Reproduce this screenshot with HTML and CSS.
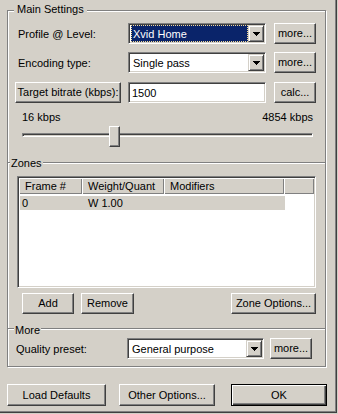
FILE: index.html
```html
<!DOCTYPE html>
<html lang="en">
<head>
    <meta charset="UTF-8">
    <meta name="viewport" content="width=device-width, initial-scale=1.0">
    <title>Xvid Configuration</title>
    <link rel="stylesheet" href="styles.css">
</head>
<body>
    <div class="window">
        <div class="group">
            <div class="legend legend-main">Main Settings</div>
            <div class="main">
                <div class="row row-1">
                    <span class="label">Profile @ Level:</span>
                    <div class="combo focused">
                        <span class="combo-text"><span class="sel">Xvid Home</span></span>
                        <span class="drop"><svg width="7" height="4" viewBox="0 0 7 4"><path d="M0 0h7v1H0zM1 1h5v1H1zM2 2h3v1H2zM3 3h1v1H3z"/></svg></span>
                    </div>
                    <button type="button" class="btn btn-side">more...</button>
                </div>
                <div class="row row-2">
                    <span class="label">Encoding type:</span>
                    <div class="combo">
                        <span class="combo-text">Single pass</span>
                        <span class="drop"><svg width="7" height="4" viewBox="0 0 7 4"><path d="M0 0h7v1H0zM1 1h5v1H1zM2 2h3v1H2zM3 3h1v1H3z"/></svg></span>
                    </div>
                    <button type="button" class="btn btn-side">more...</button>
                </div>
                <div class="row row-3">
                    <button type="button" class="btn btn-target">Target bitrate (kbps):</button>
                    <div class="edit">1500</div>
                    <button type="button" class="btn btn-side">calc...</button>
                </div>
                <div class="scale">
                    <span>16 kbps</span>
                    <span>4854 kbps</span>
                </div>
                <div class="slider">
                    <div class="channel"></div>
                    <div class="thumb" style="left: 87px;"></div>
                </div>
            </div>

            <div class="sep sep-zones"></div>
            <div class="legend legend-zones">Zones</div>
            <div class="zones">
                <div class="listview">
                    <div class="lv-header">
                        <div class="col col-frame">Frame #</div>
                        <div class="col col-weight">Weight/Quant</div>
                        <div class="col col-mod">Modifiers</div>
                        <div class="col col-rest"></div>
                    </div>
                    <div class="lv-row">
                        <span class="cell cell-frame">0</span>
                        <span class="cell cell-weight">W 1.00</span>
                    </div>
                </div>
                <div class="zone-buttons">
                    <button type="button" class="btn btn-add">Add</button>
                    <button type="button" class="btn btn-remove">Remove</button>
                    <button type="button" class="btn btn-zone">Zone Options...</button>
                </div>
            </div>

            <div class="sep sep-more"></div>
            <div class="legend legend-more">More</div>
            <div class="more">
                <div class="row row-q">
                    <span class="label label-q">Quality preset:</span>
                    <div class="combo combo-q">
                        <span class="combo-text">General purpose</span>
                        <span class="drop"><svg width="7" height="4" viewBox="0 0 7 4"><path d="M0 0h7v1H0zM1 1h5v1H1zM2 2h3v1H2zM3 3h1v1H3z"/></svg></span>
                    </div>
                    <button type="button" class="btn btn-side btn-q">more...</button>
                </div>
            </div>
        </div>

        <div class="footer">
            <button type="button" class="btn btn-load">Load Defaults</button>
            <button type="button" class="btn btn-other">Other Options...</button>
            <button type="button" class="btn btn-default btn-ok">OK</button>
        </div>
    </div>
</body>
</html>
```

FILE: styles.css
```css
body {
    margin: 0;
    background-color: #d4d0c8;
    font-family: "Liberation Sans", Arial, sans-serif;
    font-size: 11px;
    color: #000;
}
.window {
    width: 337px;
    height: 413px;
    box-sizing: border-box;
    padding-top: 10px;
    overflow: hidden;
    box-shadow: inset -1px -1px #404040, inset -2px -2px #808080;
}
.group {
    margin-left: 7px;
    width: 319px;
    height: 357px;
    box-sizing: border-box;
    border: 1px solid #808080;
    box-shadow: inset 1px 1px #fff, 1px 1px #fff;
}
.legend {
    width: fit-content;
    line-height: 13px;
    background-color: #d4d0c8;
}
.legend-main {
    margin: -8px 0 0 6px;
    padding: 0 3px;
}
.legend-zones {
    margin: -7px 0 0 2px;
    padding: 0 1px;
}
.legend-more {
    margin: -6px 0 0 6px;
    padding: 0 1px;
}
.sep {
    height: 0;
    border-top: 1px solid #808080;
    border-bottom: 1px solid #fff;
}
.sep-zones {
    margin-top: 15px;
}
.sep-more {
    margin-top: 14px;
}

/* buttons */
.btn {
    font: inherit;
    color: #000;
    padding: 0;
    height: 21px;
    box-sizing: border-box;
    background-color: #d4d0c8;
    border: 1px solid;
    border-color: #fff #404040 #404040 #fff;
    box-shadow: inset -1px -1px #808080;
    line-height: 17px;
    flex: none;
}
.btn-default {
    border: 1px solid #000;
    box-shadow: inset 1px 1px #fff, inset -1px -1px #404040, inset -2px -2px #808080;
}

/* rows */
.main {
    padding: 0 9px 0 10px;
}
.row {
    display: flex;
    align-items: center;
    height: 21px;
}
.row-1 {
    margin-top: 7px;
}
.row-2 {
    margin-top: 8px;
}
.row-3 {
    margin-top: 9px;
}
.label {
    width: 110px;
    flex: none;
}
.btn-side {
    width: 42px;
    margin-left: 8px;
}
.btn-target {
    width: 106px;
    margin: 0 7px 0 -3px;
}

/* combo boxes and edits */
.combo,
.edit {
    width: 138px;
    height: 21px;
    box-sizing: border-box;
    flex: none;
    background-color: #fff;
    border: 1px solid;
    border-color: #808080 #fff #fff #808080;
    box-shadow: inset 1px 1px #404040, inset -1px -1px #d4d0c8;
    padding: 1px;
    display: flex;
    align-items: center;
}
.edit {
    padding-left: 3px;
}
.combo-text {
    flex: 1;
    align-self: stretch;
    display: flex;
    align-items: center;
    padding-left: 3px;
    white-space: nowrap;
}
.focused .combo-text {
    padding: 0 0 0 1px;
}
.sel {
    flex: 1;
    align-self: stretch;
    display: flex;
    align-items: center;
    padding-left: 1px;
    background-color: #0a246a;
    color: #fff;
    border: 1px dotted #f5db95;
}
.drop {
    width: 16px;
    height: 17px;
    box-sizing: border-box;
    flex: none;
    display: flex;
    align-items: center;
    justify-content: center;
    background-color: #d4d0c8;
    border: 1px solid;
    border-color: #d4d0c8 #404040 #404040 #d4d0c8;
    box-shadow: inset 1px 1px #fff, inset -1px -1px #808080;
}
.drop svg {
    display: block;
}

/* slider */
.scale {
    display: flex;
    justify-content: space-between;
    margin: 8px 3px 0 4px;
    line-height: 13px;
}
.slider {
    position: relative;
    height: 21px;
    margin: 2px 3px 0 4px;
}
.channel {
    position: relative;
    top: 7px;
    height: 4px;
    box-sizing: border-box;
    border: 1px solid;
    border-color: #808080 #fff #fff #808080;
    box-shadow: inset 1px 1px #404040;
}
.thumb {
    position: absolute;
    top: 0;
    width: 11px;
    height: 21px;
    box-sizing: border-box;
    background-color: #d4d0c8;
    border: 1px solid;
    border-color: #fff #404040 #404040 #fff;
    box-shadow: inset -1px -1px #808080;
}

/* zones list */
.zones {
    padding: 0 9px;
}
.listview {
    margin-top: 6px;
    height: 112px;
    box-sizing: border-box;
    background-color: #fff;
    border: 1px solid;
    border-color: #808080 #fff #fff #808080;
    box-shadow: inset 1px 1px #404040, inset -1px -1px #d4d0c8;
    padding: 1px;
}
.lv-header {
    display: flex;
    height: 16px;
}
.col {
    box-sizing: border-box;
    display: flex;
    align-items: center;
    padding-left: 6px;
    background-color: #d4d0c8;
    box-shadow: inset 1px 1px #fff, inset -1px -1px #808080;
    white-space: nowrap;
}
.col-frame {
    width: 63px;
}
.col-weight {
    width: 82px;
}
.col-mod {
    width: 120px;
}
.col-rest {
    flex: 1;
}
.lv-row {
    display: flex;
    align-items: center;
    width: 265px;
    height: 14px;
    margin: 2px 0 0 1px;
    background-color: #d4d0c8;
}
.cell-frame {
    width: 62px;
    padding-left: 2px;
    box-sizing: border-box;
}
.cell-weight {
    padding-left: 6px;
}
.zone-buttons {
    display: flex;
    margin-top: 5px;
}
.btn-add {
    width: 52px;
    margin-left: 5px;
}
.btn-remove {
    width: 53px;
    margin-left: 7px;
}
.btn-zone {
    width: 85px;
    margin-left: auto;
}

/* more */
.more {
    padding-left: 8px;
}
.row-q {
    margin-top: 1px;
}
.label-q {
    width: 111px;
}
.combo-q {
    width: 137px;
}
.btn-q {
    margin-left: 6px;
}

/* footer */
.footer {
    display: flex;
    margin-top: 17px;
    padding-left: 7px;
}
.footer .btn {
    height: 22px;
    line-height: 18px;
}
.btn-load {
    width: 99px;
}
.btn-other {
    width: 96px;
    margin-left: 13px;
}
.btn-ok {
    width: 96px;
    margin-left: 16px;
}
```
